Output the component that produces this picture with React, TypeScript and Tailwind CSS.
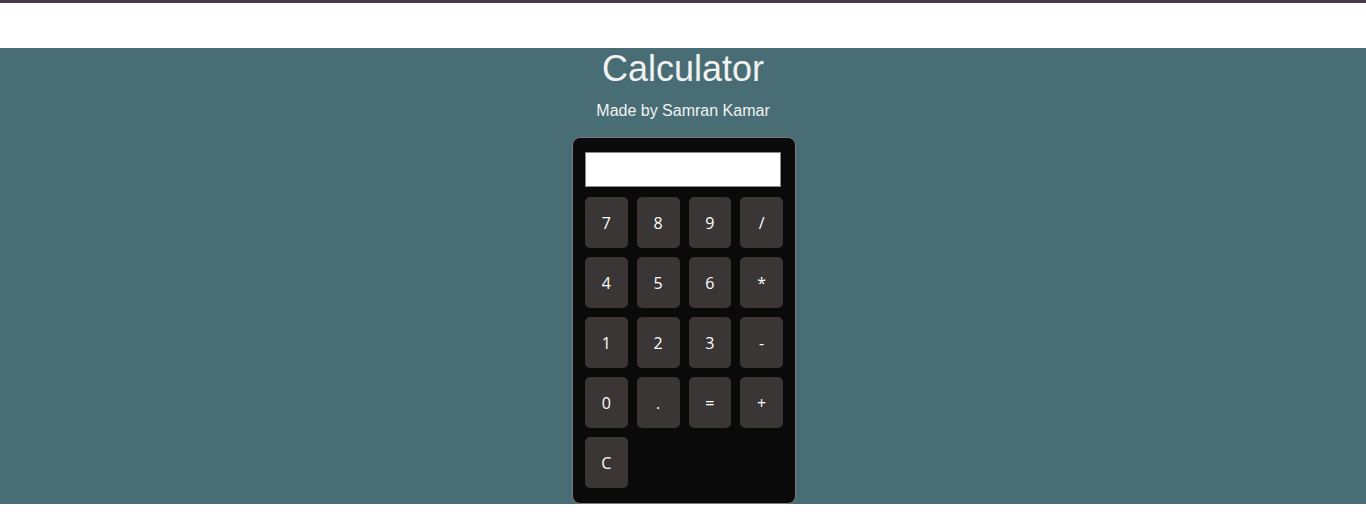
const keys = ['7', '8', '9', '/', '4', '5', '6', '*', '1', '2', '3', '-', '0', '.', '=', '+', 'C']

export default function App() {
  return (
    <div className="min-h-[526px] bg-white">
      <div className="h-[3px] bg-[#4a3848]" />
      <div className="h-[45px] bg-white" />
      <section className="bg-[#486d75] flex flex-col items-center text-[#f2f2f2] font-['Liberation_Sans',Arial,sans-serif]">
        <h1 className="text-[36px] leading-[41px] m-0">Calculator</h1>
        <p className="text-[16px] leading-[18px] mt-[13px]">Made by Samran Kamar</p>
        <div className="mt-[17px] ml-[2px] w-[224px] bg-[#0a0a0a] border border-[#7a7a7a] rounded-[8px] px-[12px] pt-[14px] pb-[15px]">
          <input className="block w-[196px] h-[35px] bg-white border border-[#8a8a8a] outline-none" />
          <div className="grid grid-cols-4 gap-x-[9px] gap-y-[9px] mt-[10px]">
            {keys.map((k) => (
              <button
                key={k}
                className="h-[51px] rounded-[5px] bg-[#3a3636] text-white text-[16px] font-['Open_Sans','Noto_Sans',sans-serif]"
              >
                {k}
              </button>
            ))}
          </div>
        </div>
      </section>
    </div>
  )
}
